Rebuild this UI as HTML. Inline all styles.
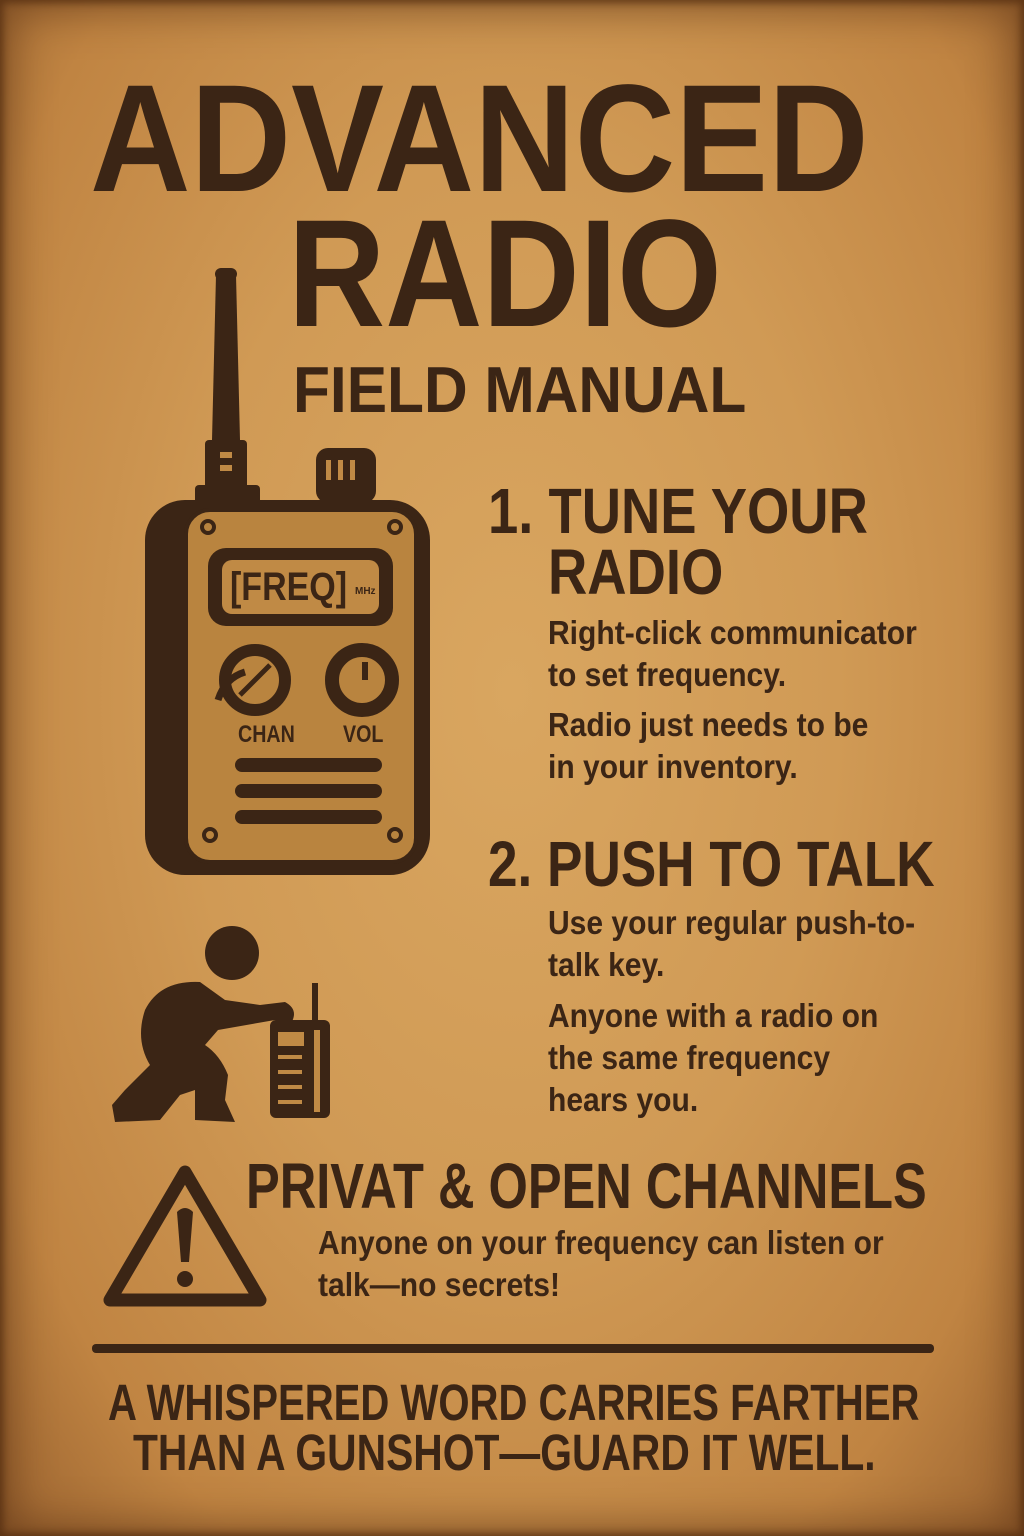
<!DOCTYPE html>
<html><head><meta charset="utf-8"><style>
html,body{margin:0;padding:0}
body{width:1024px;height:1536px;position:relative;overflow:hidden;
background:radial-gradient(ellipse at 50% 45%,#d9a660 0%,#d09a55 45%,#c08442 80%,#9a6330 100%);
font-family:"Liberation Sans",sans-serif;color:#3b2515}
.edge{position:absolute;inset:0;box-shadow:inset 0 0 40px 12px rgba(90,50,20,.55),inset 0 0 8px 3px rgba(70,35,10,.7)}
.t{position:absolute;white-space:nowrap;line-height:1;font-weight:bold;transform-origin:0 0}
</style></head><body>
<div class="edge"></div>

<div class="t" style="left:90px;top:62px;font-size:153px;transform:scaleX(.91)">ADVANCED</div>
<div class="t" style="left:288px;top:197px;font-size:153px;transform:scaleX(.88)">RADIO</div>
<div class="t" style="left:293px;top:357px;font-size:65px;transform:scaleX(.93)">FIELD MANUAL</div>

<div class="t" style="left:488px;top:479px;font-size:64px;transform:scaleX(.85)">1. TUNE YOUR</div>
<div class="t" style="left:548px;top:540px;font-size:64px;transform:scaleX(.85)">RADIO</div>
<div class="t" style="left:548px;top:616px;font-size:33px;transform:scaleX(.91)">Right-click communicator</div>
<div class="t" style="left:548px;top:658px;font-size:33px;transform:scaleX(.91)">to set frequency.</div>
<div class="t" style="left:548px;top:708px;font-size:33px;transform:scaleX(.91)">Radio just needs to be</div>
<div class="t" style="left:548px;top:750px;font-size:33px;transform:scaleX(.91)">in your inventory.</div>

<div class="t" style="left:488px;top:832px;font-size:64px;transform:scaleX(.83)">2. PUSH TO TALK</div>
<div class="t" style="left:548px;top:906px;font-size:33px;transform:scaleX(.91)">Use your regular push-to-</div>
<div class="t" style="left:548px;top:948px;font-size:33px;transform:scaleX(.91)">talk key.</div>
<div class="t" style="left:548px;top:999px;font-size:33px;transform:scaleX(.91)">Anyone with a radio on</div>
<div class="t" style="left:548px;top:1041px;font-size:33px;transform:scaleX(.91)">the same frequency</div>
<div class="t" style="left:548px;top:1083px;font-size:33px;transform:scaleX(.91)">hears you.</div>

<div class="t" style="left:246px;top:1154px;font-size:64px;transform:scaleX(.79)">PRIVAT &amp; OPEN CHANNELS</div>
<div class="t" style="left:318px;top:1226px;font-size:33px;transform:scaleX(.91)">Anyone on your frequency can listen or</div>
<div class="t" style="left:318px;top:1268px;font-size:33px;transform:scaleX(.91)">talk—no secrets!</div>

<div style="position:absolute;left:92px;top:1344px;width:842px;height:9px;background:#3b2515;border-radius:4px"></div>
<div class="t" style="left:108px;top:1377px;font-size:51px;transform:scaleX(.786)">A WHISPERED WORD CARRIES FARTHER</div>
<div class="t" style="left:133px;top:1427px;font-size:51px;transform:scaleX(.80)">THAN A GUNSHOT—GUARD IT WELL.</div>

<svg style="position:absolute;left:0;top:0" width="1024" height="1536" viewBox="0 0 1024 1536">
<g fill="#3b2515">
 <rect x="215" y="268" width="22" height="12" rx="6"/>
 <path d="M216 275 L236 275 L240 440 L212 440 Z"/>
 <rect x="205" y="440" width="42" height="60" rx="4"/>
 <rect x="195" y="485" width="65" height="20" rx="4"/>
 <rect x="316" y="448" width="60" height="55" rx="12"/>
 <rect x="145" y="500" width="285" height="375" rx="40"/>
</g>
<g fill="#c08a45"><rect x="220" y="452" width="12" height="6"/><rect x="220" y="465" width="12" height="6"/><rect x="326" y="460" width="5" height="20"/><rect x="338" y="460" width="5" height="20"/><rect x="350" y="460" width="5" height="20"/></g>
<rect x="186" y="510" width="230" height="352" rx="24" fill="#b9843f" stroke="#3b2515" stroke-width="4"/>
<rect x="208" y="548" width="185" height="78" rx="18" fill="#3b2515"/>
<rect x="222" y="560" width="157" height="54" rx="10" fill="#c08a45"/>
<text x="230" y="600" font-family="Liberation Sans" font-weight="bold" font-size="40" fill="#3b2515" transform="translate(230 0) scale(.85 1) translate(-230 0)">[FREQ]</text>
<text x="355" y="594" font-family="Liberation Sans" font-weight="bold" font-size="10" fill="#3b2515">MHz</text>
<circle cx="255" cy="680" r="30" fill="none" stroke="#3b2515" stroke-width="12"/>
<line x1="240" y1="695" x2="270" y2="665" stroke="#3b2515" stroke-width="5"/>
<path d="M218 700 Q225 678 245 672" fill="none" stroke="#3b2515" stroke-width="7"/>
<circle cx="362" cy="680" r="30" fill="none" stroke="#3b2515" stroke-width="14"/>
<line x1="365" y1="662" x2="365" y2="680" stroke="#3b2515" stroke-width="6"/>
<text x="238" y="742" font-family="Liberation Sans" font-weight="bold" font-size="24" fill="#3b2515" transform="translate(238 0) scale(.82 1) translate(-238 0)">CHAN</text>
<text x="343" y="742" font-family="Liberation Sans" font-weight="bold" font-size="24" fill="#3b2515" transform="translate(343 0) scale(.82 1) translate(-343 0)">VOL</text>
<g stroke="#3b2515" stroke-width="14" stroke-linecap="round"><line x1="242" y1="765" x2="375" y2="765"/><line x1="242" y1="791" x2="375" y2="791"/><line x1="242" y1="817" x2="375" y2="817"/></g>
<g fill="none" stroke="#3b2515" stroke-width="4"><circle cx="208" cy="527" r="6"/><circle cx="395" cy="527" r="6"/><circle cx="210" cy="835" r="6"/><circle cx="395" cy="835" r="6"/></g>

<g fill="#3b2515">
 <circle cx="232" cy="953" r="27"/>
 <path d="M200 982 Q160 980 145 1010 Q135 1040 150 1065 L125 1090 L112 1105 L115 1122 L160 1120 L180 1095 L195 1090 L195 1120 L235 1122 L225 1100 L228 1075 Q220 1055 205 1045 L218 1030 L275 1020 L290 1025 Q300 1010 285 1002 L260 1005 L225 1000 Z"/>
 <rect x="312" y="983" width="6" height="40"/>
 <rect x="270" y="1020" width="60" height="98" rx="6"/>
</g>
<g fill="#c08a45"><rect x="278" y="1032" width="26" height="14"/><rect x="278" y="1055" width="24" height="4"/><rect x="278" y="1070" width="24" height="4"/><rect x="278" y="1085" width="24" height="4"/><rect x="278" y="1100" width="24" height="4"/><rect x="314" y="1030" width="6" height="82"/></g>

<path d="M185 1172 L260 1300 L110 1300 Z" fill="none" stroke="#3b2515" stroke-width="13" stroke-linejoin="round"/>
<path d="M177 1212 Q185 1204 193 1212 L189 1262 L181 1262 Z" fill="#3b2515"/>
<circle cx="185" cy="1279" r="8" fill="#3b2515"/>
</svg>
</body></html>
